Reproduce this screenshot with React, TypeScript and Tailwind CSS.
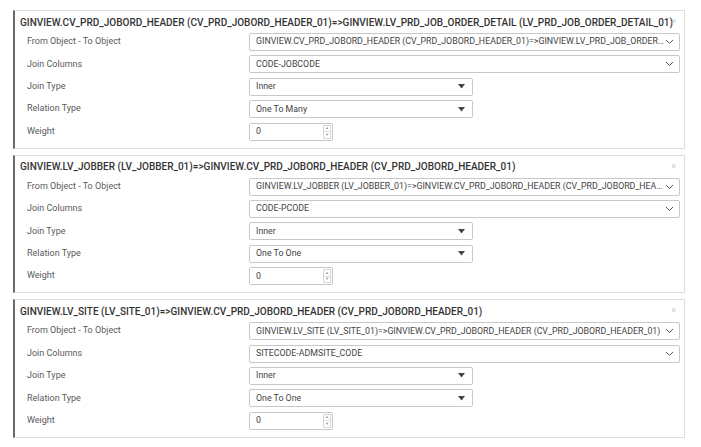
import React from 'react';

interface Relation {
  title: string;
  fromTo: string;
  joinColumns: string;
  joinType: string;
  relationType: string;
  weight: string;
}

const relations: Relation[] = [
  {
    title: 'GINVIEW.CV_PRD_JOBORD_HEADER (CV_PRD_JOBORD_HEADER_01)=>GINVIEW.LV_PRD_JOB_ORDER_DETAIL (LV_PRD_JOB_ORDER_DETAIL_01)',
    fromTo: 'GINVIEW.CV_PRD_JOBORD_HEADER (CV_PRD_JOBORD_HEADER_01)=>GINVIEW.LV_PRD_JOB_ORDER_DETAIL (LV_PRD_JOB_ORDER_DETAIL_01)',
    joinColumns: 'CODE-JOBCODE',
    joinType: 'Inner',
    relationType: 'One To Many',
    weight: '0',
  },
  {
    title: 'GINVIEW.LV_JOBBER (LV_JOBBER_01)=>GINVIEW.CV_PRD_JOBORD_HEADER (CV_PRD_JOBORD_HEADER_01)',
    fromTo: 'GINVIEW.LV_JOBBER (LV_JOBBER_01)=>GINVIEW.CV_PRD_JOBORD_HEADER (CV_PRD_JOBORD_HEADER_01)',
    joinColumns: 'CODE-PCODE',
    joinType: 'Inner',
    relationType: 'One To One',
    weight: '0',
  },
  {
    title: 'GINVIEW.LV_SITE (LV_SITE_01)=>GINVIEW.CV_PRD_JOBORD_HEADER (CV_PRD_JOBORD_HEADER_01)',
    fromTo: 'GINVIEW.LV_SITE (LV_SITE_01)=>GINVIEW.CV_PRD_JOBORD_HEADER (CV_PRD_JOBORD_HEADER_01)',
    joinColumns: 'SITECODE-ADMSITE_CODE',
    joinType: 'Inner',
    relationType: 'One To One',
    weight: '0',
  },
];

const Chevron = () => (
  <svg width="9" height="6" viewBox="0 0 9 6" className="shrink-0">
    <path d="M1 1l3.5 3.5L8 1" fill="none" stroke="#555" strokeWidth="1" />
  </svg>
);

const Caret = () => (
  <svg width="7" height="5" viewBox="0 0 7 5" className="shrink-0">
    <path d="M0 0h7L3.5 4.5z" fill="#444" />
  </svg>
);

const WideSelect = ({ value }: { value: string }) => (
  <div className="flex items-center h-[18px] w-[431px] border border-[#c8c8c8] rounded-[2px] pl-[6px] pr-[5px] bg-white">
    <span className="flex-1 overflow-hidden text-ellipsis whitespace-nowrap text-[8.8px] text-[#444]">{value}</span>
    <Chevron />
  </div>
);

const NarrowSelect = ({ value }: { value: string }) => (
  <div className="flex items-center h-[18px] w-[224px] border border-[#c8c8c8] rounded-[2px] pl-[6px] pr-[7px] bg-white">
    <span className="flex-1 truncate text-[8.8px] text-[#444]">{value}</span>
    <Caret />
  </div>
);

const NumberInput = ({ value }: { value: string }) => (
  <div className="flex items-center h-[18px] w-[84px] border border-[#c8c8c8] rounded-[2px] pl-[6px] pr-[1px] bg-white">
    <span className="flex-1 text-[8.8px] text-[#444]">{value}</span>
    <div className="flex flex-col h-[14px] w-[8px] border border-[#d5d5d5] rounded-[1px]">
      <div className="flex-1 flex items-center justify-center text-[4px] leading-none text-[#999]">▲</div>
      <div className="flex-1 flex items-center justify-center text-[4px] leading-none text-[#999] border-t border-[#e0e0e0]">▼</div>
    </div>
  </div>
);

const Row = ({ label, children }: { label: string; children: React.ReactNode }) => (
  <div className="flex items-center h-[18px]">
    <div className="w-[222px] text-[9px] text-[#5a5a5a]">{label}</div>
    {children}
  </div>
);

const RelationCard = ({ r }: { r: Relation }) => (
  <div className="relative border border-[#dedede] border-l-2 border-l-[#6a6a6a] bg-white pb-[7px]">
    <div className="h-[22px] flex items-center pl-[5px] pr-[12px] text-[10px] font-medium text-[#333] whitespace-nowrap overflow-hidden">
      {r.title}
    </div>
    <span className="absolute right-[8px] top-[4px] text-[9px] text-[#c8c8c8]">×</span>
    <div className="flex flex-col gap-[4.4px] pl-[12px]">
      <Row label="From Object - To Object"><WideSelect value={r.fromTo} /></Row>
      <Row label="Join Columns"><WideSelect value={r.joinColumns} /></Row>
      <Row label="Join Type"><NarrowSelect value={r.joinType} /></Row>
      <Row label="Relation Type"><NarrowSelect value={r.relationType} /></Row>
      <Row label="Weight"><NumberInput value={r.weight} /></Row>
    </div>
  </div>
);

export default function App() {
  return (
    <div className="w-[701px] h-[447px] bg-white overflow-hidden pt-[10px] pl-[13px] pr-[16px]" style={{ fontFamily: 'Roboto, "Liberation Sans", sans-serif' }}>
      <div className="flex flex-col gap-[6px]">
        {relations.map((r, i) => (
          <RelationCard key={i} r={r} />
        ))}
      </div>
    </div>
  );
}
